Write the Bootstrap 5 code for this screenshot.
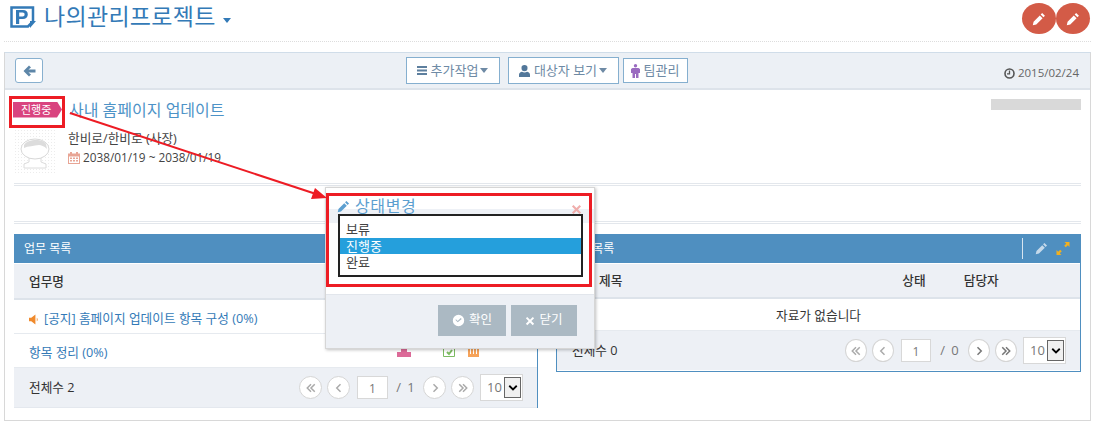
<!DOCTYPE html>
<html lang="ko">
<head>
  <meta charset="UTF-8">
  <title>나의관리프로젝트</title>
  <link href="https://cdn.jsdelivr.net/npm/bootstrap@5.3.2/dist/css/bootstrap.min.css" rel="stylesheet">
  <style>
    html, body { height: 428px; overflow: hidden; }
    body { font-family: "Open Sans", "Noto Sans CJK KR", sans-serif; font-size: 12.7px; color: #333; background: #fff; position: relative; }
    .page-head { height: 42px; margin: 0 6px 0 4px; padding: 5px 0 0 6px; border-bottom: 1px dotted #ddd; }
    .page-logo { margin-top: 1px; }
    .page-title { font-size: 23px; line-height: 28px; color: #337ab7; margin: -3px 0 0 8px; letter-spacing: .3px; }
    .caret-down { width: 0; height: 0; border: 4px solid transparent; border-top: 5px solid currentColor; border-bottom: 0; display: inline-block; }
    .title-caret { color: #337ab7; margin: 13px 0 0 7px; }
    .round-btn { width: 34px; height: 31px; border-radius: 50%; background: #d35b47; margin-top: -2px; }
    .head-btns { margin-right: 1px; }
    .main-box { position: absolute; left: 4px; top: 52px; width: 1087px; height: 369px; border: 1px solid #d8d8d8; border-top: 1px solid #d0dde9; }
    .tool-bar { height: 37px; background: #ecf0f5; border-bottom: 2px solid #dde3ea; display: grid; grid-template-columns: 1fr auto 1fr; align-items: center; padding: 0 10px; }
    .tool-mid { margin-right: 2px; }
    .back-btn { width: 28px; height: 25px; border: 1px solid #88b0cf; border-radius: 3px; background: #fff; color: #5d86a8; }
    .tool-btn { height: 27px; border: 1px solid #85afcf; background: #fff; color: #6e8aa5; gap: 4px; white-space: nowrap; font-size: 13px; justify-content: center; }
    .tool-btn.slim { height: 25px; }
    .tool-date { color: #666; font-size: 11.5px; gap: 3px; padding-top: 5px; padding-right: 1px; }
    .job-title { font-size: 16px; line-height: 20px; color: #4d93c7; margin: 1px 0 0 7px; }
    .state-tag { width: 49px; height: 16px; margin-left: 8px; background: #d9447f; color: #fff; font-size: 11px; line-height: 16px; padding-left: 8px; clip-path: polygon(0 0, 44px 0, 49px 8px, 44px 16px, 0 16px); }
    .grey-bar { width: 90px; height: 11px; background: #d9d9d9; margin-right: 9px; }
    .head-row { padding-top: 9px; height: 36px; }
    .who-row { height: 54px; padding-left: 10px; padding-top: 4px; }
    .who-text { padding-left: 13px; margin-top: -1px; line-height: 19px; color: #444; }
    .who-date { gap: 3px; font-size: 11.8px; }
    .dbl-line { height: 3px; margin: 3px 9px 0; border-top: 1px solid #e3e7ec; border-bottom: 1px solid #e3e7ec; }
    .dbl-line.far { margin-top: 35px; }
    .panel-grid { display: grid; grid-template-columns: 524px 525px; column-gap: 18px; padding: 10px 9px 0; align-items: start; }
    .panel-top { height: 30px; background: #4f8fc0; color: #fff; padding: 0 10px; line-height: 30px; border-bottom: 1px solid #fff; font-size: 12px; }
    .panel-sub { height: 36px; background: #edf0f5; border-bottom: 2px solid #dde3ea; padding: 1px 15px 0; font-weight: 500; color: #333; }
    .panel-row { height: 34px; border-bottom: 1px solid #e6eaef; padding: 5px 15px 0; }
    .panel-row a { color: #337ab7; text-decoration: none; }
    .panel-foot { height: 40px; background: #edf0f5; border-bottom: 1px solid #e4e8ee; padding: 0 14px 0 15px; }
    .left-panel { border-right: 1px solid #4f8fc0; height: 174px; }
    .right-panel { border: 1px solid #4f8fc0; border-top: 0; height: 138px; }
    .right-panel .panel-sub { height: 35px; }
    .right-panel .panel-row { height: 32px; padding: 3px 0 0; }
    .right-panel .panel-foot { height: 39px; border: 0; }
    .right-panel .pg-circle { width: 22px; }
    .right-panel .pg-input { width: 30px; }
    .right-panel .pg-count { width: 27px; }
    .pg-wrap { gap: 5px; }
    .pg-circle { width: 23px; height: 23px; border-radius: 50%; border: 1px solid #d5d5d5; background: #fff; color: #aaa; }
    .pg-circle.on { color: #777; }
    .pg-input { width: 31px; height: 23px; border: 1px solid #d8d8d8; background: #fff; color: #777; text-align: center; line-height: 23px; font-size: 12px; margin-left: 2px; }
    .pg-count { color: #777; font-size: 13px; word-spacing: 3px; width: 25px; text-align: center; white-space: nowrap; }
    .pg-size { width: 43px; height: 27px; border: 1px solid #d8d8d8; background: #fff; color: #777; font-size: 13px; padding-left: 6px; margin-left: 1px; }
    .pg-arrow { width: 17px; height: 21px; border: 1px solid #666; background: #f0f0f0; margin: 0 1px 0 auto; color: #000; }
    .head-split { width: 1px; height: 21px; background: #d7e5f0; margin-right: 12px; }
    .row-icons { margin: 9px 43px 0 auto; align-self: flex-start; height: 9px; }
    .state-dialog { position: absolute; left: 325px; top: 187px; width: 270px; height: 162px; background: #fff; border: 1px solid #d6d6d6; box-shadow: 1px 1px 3px rgba(0,0,0,.25); }
    .dialog-band { position: absolute; left: 0; right: 0; top: 21px; height: 14px; background: #eef1f6; }
    .dialog-head { position: absolute; left: 11px; right: 10px; top: 8px; color: #5c9fd0; font-size: 16px; line-height: 21px; gap: 5px; letter-spacing: .6px; }
    .dialog-close { position: absolute; right: 12px; top: 16px; color: #f0aeac; }
    .dialog-foot { position: absolute; left: 0; right: 0; bottom: 0; height: 54px; background: #edf0f5; border-top: 1px solid #e2e6ec; padding: 10px 17px 0 0; gap: 5px; justify-content: flex-end; }
    .dialog-btn { height: 31px; background: #abb9c3; color: #fff; gap: 4px; justify-content: center; font-size: 12.5px; }
    .mark-outer { position: absolute; border: 3px solid #ed1c24; }
    .mark-black { position: absolute; left: 338px; top: 214px; width: 245px; height: 63px; border: 2px solid #222; background: #fff; padding-top: 5px; line-height: 16.5px; color: #444; font-size: 13px; }
    .mark-black div { padding-left: 6px; height: 16.5px; }
    .mark-black .picked { background: #259fdc; color: #fff; }
    .mark-arrow { position: absolute; left: 0; top: 0; pointer-events: none; }
  </style>
</head>
<body>
  <svg width="0" height="0" class="position-absolute">
    <symbol id="i-pencil" viewBox="0 0 16 16"><path fill="currentColor" d="M11.600 1.200l3.200 3.200-1.700 1.700-3.200-3.200zM8.900 3.900l3.200 3.200-7.200 7.200-4 .9.900-4z"/></symbol>
    <symbol id="i-times" viewBox="0 0 16 16"><path fill="currentColor" d="M3.600 1.400L8 5.800l4.400-4.400 2.200 2.200L10.200 8l4.400 4.400-2.200 2.200L8 10.200l-4.400 4.400-2.200-2.200L5.800 8 1.400 3.600z"/></symbol>
    <symbol id="i-check" viewBox="0 0 16 16"><path fill="currentColor" fill-rule="evenodd" d="M8 1a7 7 0 1 1 0 14A7 7 0 0 1 8 1zm4 5.200l-1.300-1.300-3.700 3.700-1.700-1.700L4 7.200l3 3z"/></symbol>
    <symbol id="i-dleft" viewBox="0 0 16 16"><path fill="none" stroke="currentColor" stroke-width="2" d="M8 3L3 8l5 5M13 3L8 8l5 5"/></symbol>
    <symbol id="i-dright" viewBox="0 0 16 16"><path fill="none" stroke="currentColor" stroke-width="2" d="M3 3l5 5-5 5M8 3l5 5-5 5"/></symbol>
    <symbol id="i-left" viewBox="0 0 16 16"><path fill="none" stroke="currentColor" stroke-width="2" d="M10 3L5 8l5 5"/></symbol>
    <symbol id="i-right" viewBox="0 0 16 16"><path fill="none" stroke="currentColor" stroke-width="2" d="M6 3l5 5-5 5"/></symbol>
    <symbol id="i-down" viewBox="0 0 16 16"><path fill="none" stroke="currentColor" stroke-width="2.400" d="M3 5l5 5 5-5"/></symbol>
  </svg>

  <div class="page-head d-flex justify-content-between">
    <div class="d-flex align-items-start">
      <svg class="page-logo" width="26" height="22" viewBox="0 0 26 22"><path fill="none" stroke="#337ab7" stroke-width="2.500" d="M1.500 1.500h21.500v14l-5 5H1.500z"/><path fill="#337ab7" d="M6 4h7c3.200 0 4.800 1.800 4.800 4.400s-1.800 4.500-4.900 4.500H9.200V18H6zm3.200 2.600v3.800h3.300c1.400 0 2.100-.7 2.100-1.900s-.7-1.900-2.100-1.900z"/><path fill="#337ab7" d="M20 15h6l-6 7z"/></svg>
      <span class="page-title">나의관리프로젝트</span>
      <span class="caret-down title-caret"></span>
    </div>
    <div class="head-btns d-flex">
      <div class="round-btn d-flex align-items-center justify-content-center text-white"><svg width="14" height="14"><use href="#i-pencil"/></svg></div>
      <div class="round-btn d-flex align-items-center justify-content-center text-white"><svg width="14" height="14"><use href="#i-pencil"/></svg></div>
    </div>
  </div>

  <div class="main-box">
    <div class="tool-bar">
      <div><div class="back-btn d-flex align-items-center justify-content-center"><svg width="13" height="12" viewBox="0 0 13 12"><path fill="currentColor" d="M6 .5l2 2L5.500 4.500H12.500v3H5.500L8 9.500l-2 2L.5 6z"/></svg></div></div>
      <div class="tool-mid d-flex align-items-center">
        <div class="tool-btn d-flex align-items-center" style="width:94px">
          <svg width="10" height="9" viewBox="0 0 10 9"><path fill="#5d7f9e" d="M0 0h10v2H0zM0 3.500h10v2H0zM0 7h10v2H0z"/></svg>
          <span>추가작업</span><span class="caret-down" style="margin-left:-2px"></span>
        </div>
        <div class="tool-btn d-flex align-items-center" style="width:111px;margin-left:8px">
          <svg width="11" height="12" viewBox="0 0 11 12"><path fill="#52779a" d="M5.500 0a3 3 0 0 1 3 3.200 3 3 0 0 1-6 0A3 3 0 0 1 5.500 0zM0 12V9.700C0 8 1.500 7 3 6.800c1.500 1 3.500 1 5 0 1.500.2 3 1.200 3 2.900V12z"/></svg>
          <span>대상자 보기</span><span class="caret-down" style="margin-left:-2px"></span>
        </div>
        <div class="tool-btn slim d-flex align-items-center" style="width:65px;margin-left:4px">
          <svg width="9" height="14" viewBox="0 0 9 14"><circle cx="4.500" cy="1.700" r="1.700" fill="#9a6bc0"/><path fill="#9a6bc0" d="M1.500 4h6L9 5v4H7.500v5H5V10H4v4H1.500V9H0V5z"/></svg>
          <span>팀관리</span>
        </div>
      </div>
      <div class="tool-date d-flex align-items-center justify-content-end">
        <svg width="11" height="11" viewBox="0 0 11 11"><circle cx="5.500" cy="5.500" r="4.500" fill="none" stroke="#555" stroke-width="1.600"/><path fill="none" stroke="#555" stroke-width="1.300" d="M5.500 2.500v3.300H3"/></svg>
        <span>2015/02/24</span>
      </div>
    </div>

    <div class="head-row d-flex justify-content-between align-items-start">
      <div class="d-flex align-items-center">
        <div class="state-tag">진행중</div>
        <div class="job-title">사내 홈페이지 업데이트</div>
      </div>
      <div class="grey-bar"></div>
    </div>

    <div class="who-row d-flex align-items-start">
      <svg width="40" height="43" viewBox="0 0 40 43">
        <defs><pattern id="dots" width="3" height="3" patternUnits="userSpaceOnUse"><rect width="1" height="1" fill="#ececec"/></pattern></defs>
        <rect width="40" height="43" fill="url(#dots)"/>
        <path fill="#fff" stroke="#dcdcdc" d="M14 28h12v4l5 2v4H9v-4l5-2z"/>
        <ellipse cx="20" cy="19" rx="14" ry="10" fill="#fff" stroke="#d8d8d8"/>
        <path fill="#dcdcdc" d="M9 15c3-6 19-7 22-1l1 5c-3-3-6-4-8-4-5 1-11 1-15 3z"/>
      </svg>
      <div class="who-text">
        <div>한비로/한비로 (사장)</div>
        <div class="who-date d-flex align-items-center">
          <svg width="12" height="12" viewBox="0 0 12 12"><path fill="#e8a595" d="M0 1.500h2V0h2v1.500h4V0h2v1.500h2V12H0zM1 4.500v6.500h10V4.500z"/><path fill="#e8a595" d="M2 5.500h2v1.500H2zM5 5.500h2v1.500H5zM8 5.500h2v1.500H8zM2 8h2v1.500H2zM5 8h2v1.500H5zM8 8h2v1.500H8z"/></svg>
          <span>2038/01/19 ~ 2038/01/19</span>
        </div>
      </div>
    </div>
    <div class="dbl-line"></div>
    <div class="dbl-line far"></div>

    <div class="panel-grid">
      <div class="left-panel">
        <div class="panel-top">업무 목록</div>
        <div class="panel-sub d-flex align-items-center">업무명</div>
        <div class="panel-row d-flex align-items-center" style="gap:4px">
          <svg width="11" height="11" viewBox="0 0 12 11"><path fill="#f08a2c" d="M0 3.500h2.500L7 0v11L2.500 7.500H0zM8.500 3.500c1.300.8 1.300 3.200 0 4z"/></svg>
          <a href="#">[공지] 홈페이지 업데이트 항목 구성 (0%)</a>
        </div>
        <div class="panel-row d-flex align-items-center">
          <a href="#">항목 정리 (0%)</a>
          <div class="row-icons d-flex">
            <svg width="14" height="9" viewBox="0 0 14 9"><path fill="#dc6a98" d="M4 0h6v4h4v5H0V4h4z"/></svg>
            <svg width="13" height="9" viewBox="0 0 13 9" style="margin-left:32px"><path fill="none" stroke="#7cbb62" d="M.5 0v8.500h11V0"/><path fill="none" stroke="#7cbb62" stroke-width="2" d="M4 4l2 2 3-4"/></svg>
            <svg width="11" height="9" viewBox="0 0 11 9" style="margin-left:12px"><path fill="#f6a35a" d="M0 0h11v9H0z"/><path fill="#fff" d="M2 0h1v6H2zM5 0h1v6H5zM8 0h1v6H8z"/></svg>
          </div>
        </div>
        <div class="panel-foot d-flex align-items-center">
          <span>전체수 2</span>
          <div class="pg-wrap ms-auto d-flex align-items-center">
            <div class="pg-circle d-flex align-items-center justify-content-center"><svg width="12" height="12"><use href="#i-dleft"/></svg></div>
            <div class="pg-circle d-flex align-items-center justify-content-center"><svg width="12" height="12"><use href="#i-left"/></svg></div>
            <div class="pg-input">1</div>
            <span class="pg-count">/ 1</span>
            <div class="pg-circle d-flex align-items-center justify-content-center"><svg width="12" height="12"><use href="#i-right"/></svg></div>
            <div class="pg-circle d-flex align-items-center justify-content-center"><svg width="12" height="12"><use href="#i-dright"/></svg></div>
            <div class="pg-size d-flex align-items-center">10<div class="pg-arrow d-flex align-items-center justify-content-center"><svg width="12" height="12"><use href="#i-down"/></svg></div></div>
          </div>
        </div>
      </div>

      <div class="right-panel">
        <div class="panel-top d-flex align-items-center">
          <span>업무 목록</span>
          <div class="head-split ms-auto"></div>
          <svg width="13" height="13" style="color:#c5d9ea"><use href="#i-pencil"/></svg>
          <svg width="14" height="13" viewBox="0 0 13 13" class="ms-2"><path fill="#f2b01e" d="M8 0h5v5l-1.700-1.700-2 2-1.600-1.600 2-2zM5 13H0V8l1.700 1.700 2-2 1.600 1.600-2 2z"/></svg>
        </div>
        <div class="panel-sub d-flex align-items-center">
          <span style="margin-left:27px">제목</span>
          <span style="margin-left:280px">상태</span>
          <span style="margin-left:38px">담당자</span>
        </div>
        <div class="panel-row d-flex align-items-center justify-content-center">자료가 없습니다</div>
        <div class="panel-foot d-flex align-items-center">
          <span>전체수 0</span>
          <div class="pg-wrap ms-auto d-flex align-items-center">
            <div class="pg-circle d-flex align-items-center justify-content-center"><svg width="12" height="12"><use href="#i-dleft"/></svg></div>
            <div class="pg-circle d-flex align-items-center justify-content-center"><svg width="12" height="12"><use href="#i-left"/></svg></div>
            <div class="pg-input">1</div>
            <span class="pg-count">/ 0</span>
            <div class="pg-circle on d-flex align-items-center justify-content-center"><svg width="12" height="12"><use href="#i-right"/></svg></div>
            <div class="pg-circle on d-flex align-items-center justify-content-center"><svg width="12" height="12"><use href="#i-dright"/></svg></div>
            <div class="pg-size d-flex align-items-center">10<div class="pg-arrow d-flex align-items-center justify-content-center"><svg width="12" height="12"><use href="#i-down"/></svg></div></div>
          </div>
        </div>
      </div>
    </div>
  </div>

  <!-- 상태변경 팝업 -->
  <div class="state-dialog">
    <div class="dialog-band"></div>
    <div class="dialog-head d-flex align-items-center">
      <svg width="13" height="13"><use href="#i-pencil"/></svg>
      <span>상태변경</span>
    </div>
    <svg class="dialog-close" width="11" height="11"><use href="#i-times"/></svg>
    <div class="dialog-foot d-flex">
      <div class="dialog-btn d-flex align-items-center" style="width:68px"><svg width="13" height="13"><use href="#i-check"/></svg>확인</div>
      <div class="dialog-btn d-flex align-items-center" style="width:66px"><svg width="10" height="10"><use href="#i-times"/></svg>닫기</div>
    </div>
  </div>

  <!-- 설명용 표시 -->
  <div class="mark-black">
    <div>보류</div>
    <div class="picked">진행중</div>
    <div>완료</div>
  </div>
  <div class="mark-outer" style="left:326px;top:193px;width:266px;height:94px"></div>
  <div class="mark-outer" style="left:9px;top:96px;width:56px;height:32px"></div>
  <svg class="mark-arrow" width="1097" height="428" viewBox="0 0 1097 428">
    <path fill="none" stroke="#ed1c24" stroke-width="2" d="M70 113L316 194"/>
    <path fill="#ed1c24" d="M327 198L311 199L315 188z"/>
  </svg>

  <script src="https://cdn.jsdelivr.net/npm/bootstrap@5.3.2/dist/js/bootstrap.bundle.min.js"></script>
</body>
</html>
